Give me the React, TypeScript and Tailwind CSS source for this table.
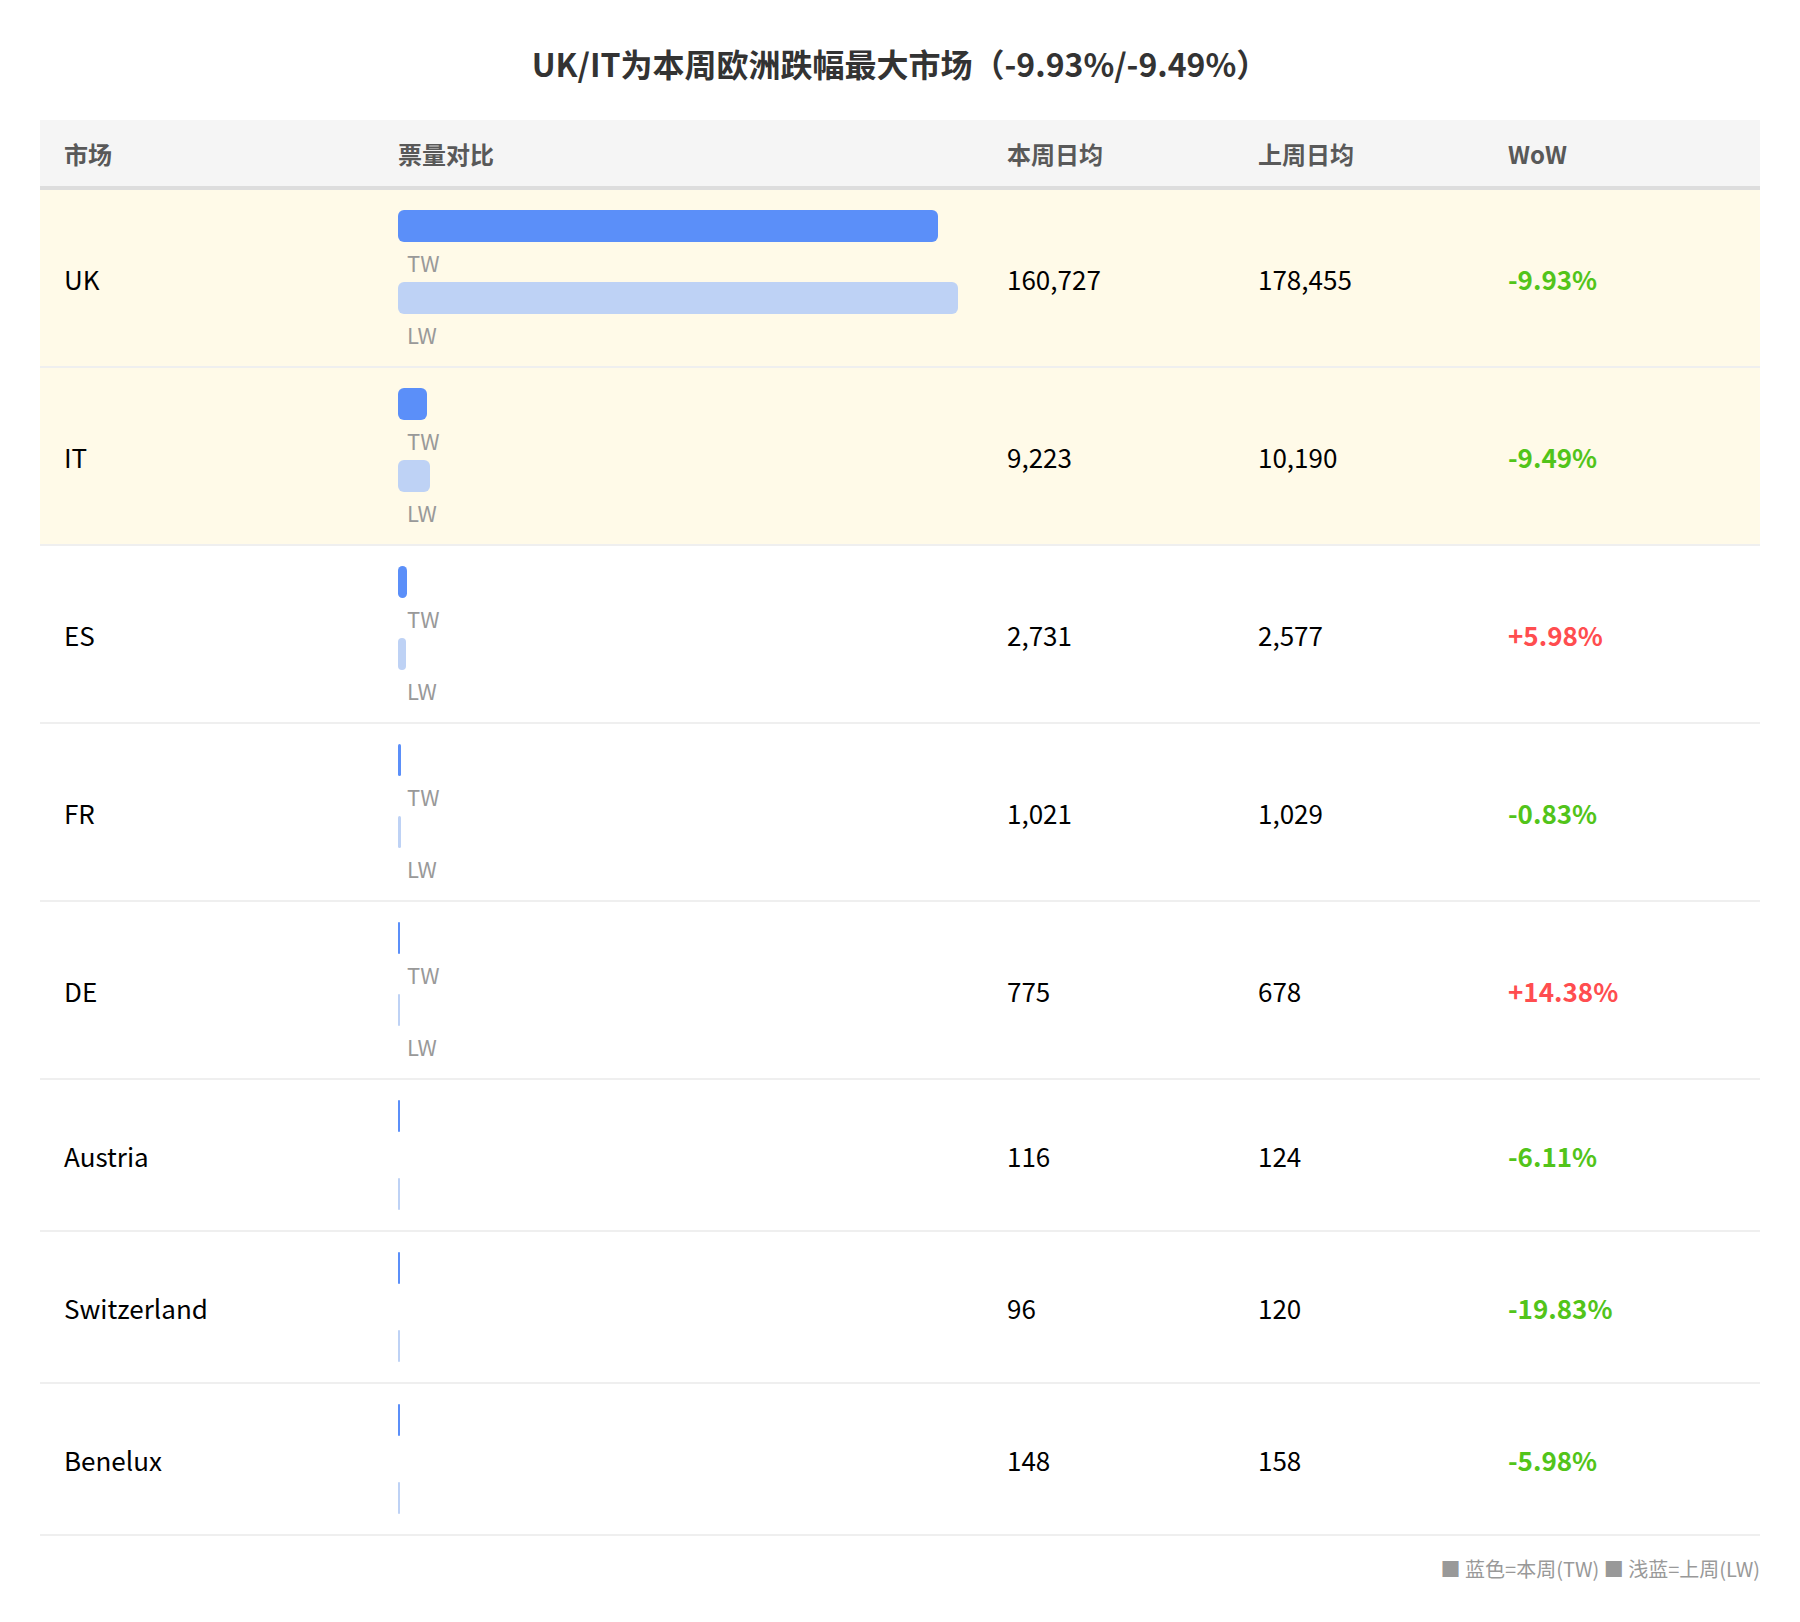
import React from "react";

type Row = {
  m: string;
  tw: number;
  lw: number;
  wow: string;
  up: boolean;
  hi: boolean;
  labels: boolean;
  twW?: number;
};

const rows: Row[] = [
  { m: "UK", tw: 160727, lw: 178455, wow: "-9.93%", up: false, hi: true, labels: true, twW: 540 },
  { m: "IT", tw: 9223, lw: 10190, wow: "-9.49%", up: false, hi: true, labels: true },
  { m: "ES", tw: 2731, lw: 2577, wow: "+5.98%", up: true, hi: false, labels: true },
  { m: "FR", tw: 1021, lw: 1029, wow: "-0.83%", up: false, hi: false, labels: true },
  { m: "DE", tw: 775, lw: 678, wow: "+14.38%", up: true, hi: false, labels: true },
  { m: "Austria", tw: 116, lw: 124, wow: "-6.11%", up: false, hi: false, labels: false },
  { m: "Switzerland", tw: 96, lw: 120, wow: "-19.83%", up: false, hi: false, labels: false },
  { m: "Benelux", tw: 148, lw: 158, wow: "-5.98%", up: false, hi: false, labels: false },
];

const MAX = 178455;
const FULL = 560;
const w = (v: number) => Math.max(2, (v / MAX) * FULL);
const fmt = (n: number) => n.toLocaleString("en-US");

const grid = "grid grid-cols-[334px_609px_251px_250px_276px]";

export default function App() {
  return (
    <div className="w-[1800px] min-h-[1622px] bg-white px-[40px] pt-[38px] font-['Noto_Sans_CJK_SC',sans-serif]">
      <h1 className="h-[51px] text-center text-[32px] font-bold leading-[51px] text-[#333333] mb-[31px]">
        UK/IT为本周欧洲跌幅最大市场（-9.93%/-9.49%）
      </h1>
      <div className="w-[1720px]">
        <div className={`${grid} h-[70px] pt-[2px] bg-[#f5f5f5] border-b-4 border-[#dddddd] text-[24px] font-bold text-[#595959]`}>
          <div className="flex items-center pl-[24px]">市场</div>
          <div className="flex items-center pl-[24px]">票量对比</div>
          <div className="flex items-center pl-[24px]">本周日均</div>
          <div className="flex items-center pl-[24px]">上周日均</div>
          <div className="flex items-center pl-[24px]">WoW</div>
        </div>
        {rows.map((r) => (
          <div
            key={r.m}
            className={`${grid} border-b-2 border-[#efefef] ${r.hi ? "bg-[#fffae8]" : "bg-white"} ${
              r.labels ? "h-[178px]" : "h-[152px]"
            } text-[26px] text-black`}
          >
            <div className="flex items-center pl-[24px]">{r.m}</div>
            <div className="flex flex-col pl-[24px] pt-[20px]">
              <div className="h-[32px] rounded-[6px] bg-[#5b8ff9]" style={{ width: r.twW ?? w(r.tw) }} />
              {r.labels ? (
                <div className="mt-[6px] mb-[6px] h-[28px] pl-[9px] text-[22px] leading-[28px] text-[#999999]">TW</div>
              ) : (
                <div className="h-[46px]" />
              )}
              <div className="h-[32px] rounded-[6px] bg-[#bed2f5]" style={{ width: w(r.lw) }} />
              {r.labels && (
                <div className="mt-[6px] h-[28px] pl-[9px] text-[22px] leading-[28px] text-[#999999]">LW</div>
              )}
            </div>
            <div className="flex items-center pl-[24px]">{fmt(r.tw)}</div>
            <div className="flex items-center pl-[24px]">{fmt(r.lw)}</div>
            <div
              className={`flex items-center pl-[24px] font-bold ${r.up ? "text-[#ff4d4f]" : "text-[#52c41a]"}`}
            >
              {r.wow}
            </div>
          </div>
        ))}
        <div className="mt-[18px] flex justify-end text-[20px] leading-[30px] text-[#999999]">
          <span>■ 蓝色=本周(TW) ■ 浅蓝=上周(LW)</span>
        </div>
      </div>
    </div>
  );
}
